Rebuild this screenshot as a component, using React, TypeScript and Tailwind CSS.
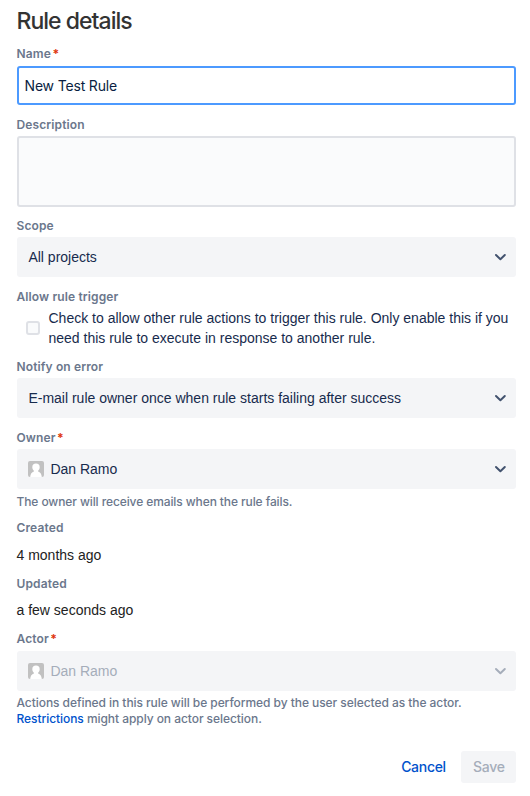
import type { ReactNode } from "react";

const ui = "font-['Inter',sans-serif]";
const body = "font-['Liberation_Sans',Arial,sans-serif]";

function Label({ children, required, className = "" }: { children: ReactNode; required?: boolean; className?: string }) {
  return (
    <div className={`${ui} flex h-4 text-[12px] leading-4 font-semibold tracking-[0.12px] text-[#6B778C] ${className}`}>
      <span>{children}</span>
      {required && <span className="pl-[1.5px] font-bold text-[#DE350B]">*</span>}
    </div>
  );
}

function Chevron() {
  return (
    <svg className="mr-2 h-4 w-4 shrink-0" viewBox="0 0 16 16" fill="none" stroke="currentColor" strokeWidth="2" strokeLinecap="round" strokeLinejoin="round">
      <path d="M4 6 8.400 10.200 12.800 6" />
    </svg>
  );
}

function Avatar() {
  return (
    <svg className="mr-1.5 h-4 w-4 shrink-0" viewBox="0 0 16 16">
      <rect width="16" height="16" rx="2" fill="#C1C1C1" />
      <path d="M8 2.600a3.700 3.700 0 0 0-3.700 3.700c0 1.500.7 2.700 1.600 3.400v.7C3.800 11 2.400 12.600 2.200 16h11.600c-.2-3.400-1.600-5-3.700-5.600v-.7c.9-.7 1.600-1.900 1.600-3.400A3.700 3.700 0 0 0 8 2.600Z" fill="#fff" />
    </svg>
  );
}

function Select({ value, avatar, disabled }: { value: string; avatar?: boolean; disabled?: boolean }) {
  return (
    <div className={`${body} flex h-10 items-center rounded-[3px] bg-[#F4F5F7] pl-[11.900px] text-[14px] leading-5 ${disabled ? "text-[#A5ADBA]" : "text-[#172B4D]"}`}>
      {avatar && <Avatar />}
      <span className="flex-1">{value}</span>
      <span className={disabled ? "text-[#A5ADBA]" : "text-[#42526E]"}>
        <Chevron />
      </span>
    </div>
  );
}

export default function App() {
  return (
    <div className="h-[796px] w-[530px] overflow-hidden bg-white pr-[13.700px] pl-[16.500px]">
      <h1 className={`${ui} pt-[7px] text-[23px] leading-7 font-medium tracking-[-0.97px] text-[#333333]`}>Rule details</h1>

      <Label required className="mt-[11px]">Name</Label>
      <div className={`${ui} mt-1 flex h-[39px] items-center rounded-[3px] border-2 border-[#4C9AFF] bg-white px-1.5 text-[14px] tracking-[-0.17px] text-[#091E42]`}>
        New Test Rule
      </div>

      <Label className="mt-3">Description</Label>
      <div className="mt-[3px] h-[71px] rounded-[3px] border-2 border-[#DFE1E6] bg-[#FAFBFC]" />

      <Label className="mt-[11px]">Scope</Label>
      <div className="mt-[3px]"><Select value="All projects" /></div>

      <Label className="mt-3">Allow rule trigger</Label>
      <div className="mt-[3px] flex h-10 items-center pl-[9px]">
        <div className="h-3.5 w-3.5 shrink-0 rounded-[3px] border-2 border-[#DFE1E6] bg-[#FAFBFC]" />
        <p className={`${body} ml-[9px] text-[14px] leading-5 whitespace-nowrap text-[#172B4D]`}>
          Check to allow other rule actions to trigger this rule. Only enable this if you
          <br />
          need this rule to execute in response to another rule.
        </p>
      </div>

      <Label className="mt-[11px]">Notify on error</Label>
      <div className="mt-[3px]"><Select value="E-mail rule owner once when rule starts failing after success" /></div>

      <Label required className="mt-3">Owner</Label>
      <div className="mt-[3px]"><Select value="Dan Ramo" avatar /></div>
      <p className={`${ui} mt-[5px] text-[12px] leading-4 font-medium tracking-[-0.1px] text-[#6B778C]`}>The owner will receive emails when the rule fails.</p>

      <Label className="mt-2.5">Created</Label>
      <p className={`${body} mt-[9px] text-[14px] leading-5 text-[#222222]`}>4 months ago</p>

      <Label className="mt-[11px]">Updated</Label>
      <p className={`${body} mt-2 text-[14px] leading-5 text-[#222222]`}>a few seconds ago</p>

      <Label required className="mt-[11px]">Actor</Label>
      <div className="mt-1"><Select value="Dan Ramo" avatar disabled /></div>
      <p className={`${ui} mt-1 text-[12px] leading-4 font-medium tracking-[-0.06px] text-[#6B778C]`}>
        Actions defined in this rule will be performed by the user selected as the actor.
        <br />
        <a className="text-[#0052CC]">Restrictions</a> might apply on actor selection.
      </p>

      <div className={`${ui} mt-6 flex h-8 justify-end gap-1 text-[14px] leading-8 font-medium tracking-[-0.3px]`}>
        <button className="pr-[11.500px] pl-3 text-[#0052CC]">Cancel</button>
        <button className="w-[55px] rounded-[3px] bg-[#F4F5F7] text-[#A5ADBA]">Save</button>
      </div>
    </div>
  );
}
